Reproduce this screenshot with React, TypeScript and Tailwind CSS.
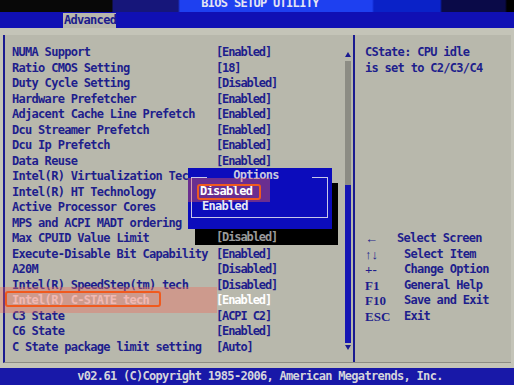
import React from 'react';

const settings: { label: string; value: string }[] = [
  { label: 'NUMA Support', value: '[Enabled]' },
  { label: 'Ratio CMOS Setting', value: '[18]' },
  { label: 'Duty Cycle Setting', value: '[Disabled]' },
  { label: 'Hardware Prefetcher', value: '[Enabled]' },
  { label: 'Adjacent Cache Line Prefetch', value: '[Enabled]' },
  { label: 'Dcu Streamer Prefetch', value: '[Enabled]' },
  { label: 'Dcu Ip Prefetch', value: '[Enabled]' },
  { label: 'Data Reuse', value: '[Enabled]' },
  { label: 'Intel(R) Virtualization Tech', value: '[Enabled]' },
  { label: 'Intel(R) HT Technology', value: '[Enabled]' },
  { label: 'Active Processor Cores', value: '[All]' },
  { label: 'MPS and ACPI MADT ordering', value: '[Modern]' },
  { label: 'Max CPUID Value Limit', value: '' },
  { label: 'Execute-Disable Bit Capability', value: '[Enabled]' },
  { label: 'A20M', value: '[Disabled]' },
  { label: 'Intel(R) SpeedStep(tm) tech', value: '[Disabled]' },
  { label: 'Intel(R) C-STATE tech', value: '[Enabled]' },
  { label: 'C3 State', value: '[ACPI C2]' },
  { label: 'C6 State', value: '[Enabled]' },
  { label: 'C State package limit setting', value: '[Auto]' },
];

const keys = [
  { key: '←', desc: 'Select Screen', w: 'w-[32px]' },
  { key: '↑↓', desc: 'Select Item', w: 'w-[39px]' },
  { key: '+-', desc: 'Change Option', w: 'w-[39px]' },
  { key: 'F1', desc: 'General Help', w: 'w-[39px]' },
  { key: 'F10', desc: 'Save and Exit', w: 'w-[39px]' },
  { key: 'ESC', desc: 'Exit', w: 'w-[39px]' },
];

const Arrow = ({ up }: { up?: boolean }) => (
  <svg width="6" height="10" viewBox="0 0 6 10" className="block">
    {up ? <polygon points="0,8 3,3 6,8" fill="#1a1a90" /> : <polygon points="0,2 3,7 6,2" fill="#1a1a90" />}
  </svg>
);

const App = () => {
  return (
    <div className="relative w-[514px] h-[385px] overflow-hidden flex flex-col bg-[#c4c4b8] font-['DejaVu_Sans_Mono',monospace] font-bold text-[12px] tracking-[-0.7px]">
      {/* title bar */}
      <div className="h-[12px] overflow-hidden bg-[linear-gradient(to_right,#080808_0px,#080808_112px,#16167a_113px,#16167a_178px,#1e40f0_180px,#1e40f0_372px,#0a22c8_374px,#0a22c8_440px,#0a0a48_442px,#0a0a48_505px,#000_507px)]">
        <div className="text-center text-[#e4e4f4] leading-[12px] -mt-[3px] pl-[6px]">BIOS SETUP UTILITY</div>
      </div>
      {/* tab bar */}
      <div className="h-[16px] bg-[#1010b4] flex items-end">
        <div className="ml-[63px] w-[53px] h-[15px] bg-[#b8b8ac] text-[#1c1c8c] leading-[15px] pl-[1px]">Advanced</div>
      </div>

      {/* main */}
      <div className="flex-1 pt-[7px] pl-[3px] pr-[3px] pb-[5px] flex">
        <div className="flex-1 flex bg-[#b8b8ac] border-l-2 border-[#1a1a90] border-b border-b-[#8c8c84]">
          {/* left panel */}
          <div className="w-[348px] flex">
            <div className="flex-1 pt-[10px] pl-[7px] text-[#1e1e8c]">
              {settings.map((s, i) => (
                <div
                  key={i}
                  className={`h-[15.5px] leading-[15.5px] grid grid-cols-[204px_1fr] whitespace-nowrap ${
                    s.label === 'Intel(R) C-STATE tech' ? 'text-[#f4ecec]' : ''
                  }`}
                >
                  <span className="overflow-hidden">{s.label}</span>
                  <span className={`tracking-[-1.1px] ${s.label === 'Intel(R) C-STATE tech' ? 'text-white' : ''}`}>{s.value}</span>
                </div>
              ))}
            </div>
            {/* scrollbar */}
            <div className="w-[6px] mr-[2px] pt-[14px] flex flex-col">
              <Arrow up />
              <div className="h-[2px]" />
              <div className="h-[124px] bg-[#8c8c84]" />
              <div className="h-[158px] bg-[#1414b4]" />
              <Arrow />
            </div>
          </div>
          {/* divider */}
          <div className="w-[2px] bg-[#1a1a90]" />
          {/* right panel */}
          <div className="flex-1 pt-[10px] pl-[10px] text-[#1e1e8c]">
            <div className="h-[15.5px] leading-[15.5px]">CState: CPU idle</div>
            <div className="h-[15.5px] leading-[15.5px]">is set to C2/C3/C4</div>
            <div className="mt-[155px]">
              {keys.map((k) => (
                <div key={k.key} className="h-[15.5px] leading-[15.5px] flex">
                  <span className={`${k.w} font-['Liberation_Serif',serif] text-[13px] tracking-normal`}>{k.key}</span>
                  <span>{k.desc}</span>
                </div>
              ))}
            </div>
          </div>
        </div>
      </div>

      {/* footer */}
      <div className="h-[17px] bg-[#1818a8] text-[#d4d4dc] text-center leading-[17px] pl-[6px]">
        v02.61 (C)Copyright 1985-2006, American Megatrends, Inc.
      </div>

      {/* highlight on C-STATE row */}
      <div className="absolute left-0 top-[287px] w-[217px] h-[26px] bg-[rgba(238,110,96,0.4)]" />
      <div className="absolute left-[5px] top-[291px] w-[156px] h-[16px] rounded-[3px] border-2 border-[#f05a1e]" />

      {/* popup shadow */}
      <div className="absolute left-[195px] top-[183px] w-[143px] h-[62px] bg-black">
        <div className="absolute left-[21px] top-[47px] leading-[15.5px] text-[#9a9a9a] tracking-[-1.1px]">[Disabled]</div>
      </div>
      {/* options popup */}
      <div className="absolute left-[188px] top-[168px] w-[144px] h-[61px] bg-[#0c0cbc]">
        <div className="absolute left-[3px] top-[9px] right-[4px] bottom-[11px] border border-[#c8c8e8] border-t-0" />
        <div className="absolute left-[3px] top-[9px] w-[16px] h-px bg-[#c8c8e8]" />
        <div className="absolute right-[4px] top-[9px] w-[16px] h-px bg-[#c8c8e8]" />
        <div className="absolute left-0 right-[8px] top-0 h-[15px] leading-[15px] text-center text-[#c8c8dc]">Options</div>
        <div className="absolute left-0 top-[10px] w-[82px] h-[24px] bg-[rgba(238,96,84,0.42)]" />
        <div className="absolute left-[12px] top-[16px] leading-[15.5px] text-white">Disabled</div>
        <div className="absolute left-[14px] top-[31px] leading-[15.5px] text-[#e8e8f4]">Enabled</div>
        <div className="absolute left-[9px] top-[16px] w-[64px] h-[16px] rounded-[3px] border-2 border-[#f05a1e]" />
      </div>
    </div>
  );
};

export default App;
